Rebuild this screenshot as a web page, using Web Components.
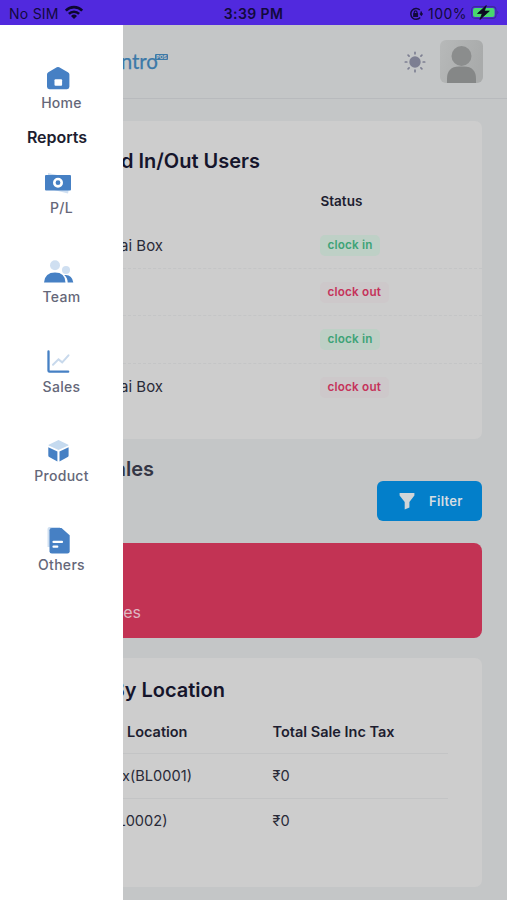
<!DOCTYPE html>
<html lang="en">
<head>
<meta charset="utf-8">
<title>Dashboard</title>
<style>
html,body{margin:0;height:100%;overflow:hidden}
body{font-family:Inter,"Liberation Sans",sans-serif;background:#c4c6c7;color:#15152b}
</style>
</head>
<body>
<pos-app></pos-app>
<script>
const define = (name, css, html) => customElements.define(name, class extends HTMLElement {
  constructor() {
    super();
    const root = this.attachShadow({ mode: "open" });
    const t = document.createElement("template");
    t.innerHTML = `<style>*{box-sizing:border-box}svg{display:block;flex:none}${css}</style>${html}`;
    root.append(t.content.cloneNode(true));
  }
});

define("status-bar", `
:host{display:grid;grid-template-columns:1fr auto 1fr;align-items:center;height:25px;flex:none;background:#5129de;color:#120a3c;padding:2px 8px 0 9px;font-size:14px;line-height:22px}
.l,.r{display:flex;align-items:center}.r{justify-content:flex-end}
.t{font-weight:600;letter-spacing:.4px;margin-right:1px}
`, `
<div class="l"><span style="letter-spacing:.25px">No SIM</span>
<svg width="20" height="15" viewBox="0 0 20 15" style="margin-left:5px;margin-top:-2px" fill="none" stroke="#0d0730" stroke-width="2.6"><path d="M1.8 5.6a11.5 11.5 0 0 1 16.4 0M4.9 8.9a7.2 7.2 0 0 1 10.2 0"/><path d="M10 14l-3-3a4.3 4.3 0 0 1 6 0z" fill="#0d0730" stroke="none"/></svg></div>
<div class="t">3:39 PM</div>
<div class="r">
<svg width="14" height="14" viewBox="0 0 14 14" fill="none" stroke="#120a3c" stroke-width="1.5"><path d="M10.8 2.9A5.4 5.4 0 1 0 11.2 10.6"/><path d="M12.2 4.4v3.1M11 6.4l1.3 1.6 1.3-1.6"/><rect x="4.1" y="6.1" width="5" height="3.9" rx=".6" fill="#120a3c" stroke="none"/><path d="M5.2 6.5V5.2a1.4 1.4 0 0 1 2.8 0v1.3" stroke-width="1.2"/></svg>
<span style="margin:0 4px 0 5px;letter-spacing:.45px">100%</span>
<svg width="28" height="15" viewBox="0 0 28 15" style="margin-top:-2px"><rect x=".6" y="1.6" width="24.4" height="11.8" rx="3.4" fill="none" stroke="#3d2a9c" stroke-width="1.1"/><rect x="2" y="3" width="21.6" height="9" rx="2" fill="#48d86e"/><path d="M26.3 5.5q2.2 2 0 4z" fill="#3d2a9c"/><path d="M15.3.5L6.5 8.5h4.8L8.9 14.5l9.4-8.4h-5z" fill="#0c0a20" stroke="#0c0a20" stroke-width=".8"/></svg>
</div>`);

define("nav-item", `
:host{display:flex;flex-direction:column;align-items:center;height:89.4px;color:#656779;font-size:14px;font-weight:500;line-height:20px;letter-spacing:.3px}
.i{width:28px;height:28px;margin-right:7px}
.t{margin-top:1px}
`, `<div class="i"><slot name="icon"></slot></div><div class="t"><slot></slot></div>`);

define("side-drawer", `
:host{display:flex;flex-direction:column;width:123px;flex:none;background:#fff;padding-top:38.8px}
h2{margin:0;font-size:16px;font-weight:600;line-height:24px;text-align:center;padding-right:9px;color:#1d1d30;letter-spacing:-.02px;margin-bottom:20px}
nav-item.home{height:61px}
`, `
<nav-item class="home"><svg slot="icon" width="28" height="28" viewBox="0 0 28 28"><path d="M3 10.5Q3 9 4.3 8.3L12.8 3.3Q14 2.6 15.2 3.3L23.9 8.3Q25.4 9 25.4 10.5V22.8Q25.4 25.2 23 25.2H5.4Q3 25.2 3 22.8Z" fill="#4680c4"/><rect x="10.5" y="15.2" width="7.6" height="6.6" rx="1" fill="#fff"/></svg>Home</nav-item>
<h2>Reports</h2>
<nav-item><svg slot="icon" width="28" height="28" viewBox="0 0 28 28"><path d="M4 4l23 5-3 15.5-20-5z" fill="#cfdff1"/><rect x="1" y="6" width="26" height="15.4" rx="1" fill="#4680c4"/><circle cx="14" cy="13.7" r="3.7" fill="none" stroke="#fff" stroke-width="2.6"/></svg>P/L</nav-item>
<nav-item><svg slot="icon" width="30" height="28" viewBox="0 0 30 28"><circle cx="11" cy="7.2" r="5" fill="#cfdff1"/><circle cx="22" cy="12" r="4" fill="#cfdff1"/><path d="M0 24.4Q1 14.6 11 14.6T21.5 24.4Z" fill="#4680c4"/><path d="M20.2 17Q28 16 29.3 24.4H23.7Q23.6 20 20.2 17Z" fill="#4680c4"/></svg>Team</nav-item>
<nav-item><svg slot="icon" width="28" height="28" viewBox="0 0 28 28" fill="none" stroke-linecap="round"><path d="M4.5 3.5V22.8Q4.5 23.7 5.5 23.7H24.2" stroke="#4680c4" stroke-width="2.3"/><path d="M9 16.8l5.5-5.4 3.7 3L24.5 7.3" stroke="#c8d9ec" stroke-width="2"/></svg>Sales</nav-item>
<nav-item><svg slot="icon" width="28" height="28" viewBox="0 0 28 28"><path d="M14.5 2.9L24.3 7.7Q25 8.2 24.3 8.6L14.5 13 4.7 8.6Q4 8.2 4.7 7.7Z" fill="#c5daef"/><path d="M4.3 10.3L13.4 14.5V24.4L5.2 20Q4.3 19.5 4.3 18.5ZM24.6 10.3L15.5 14.5V24.4L23.7 20Q24.6 19.5 24.6 18.5Z" fill="#4680c4"/></svg>Product</nav-item>
<nav-item><svg slot="icon" width="28" height="28" viewBox="0 0 28 28"><path d="M3.5 3Q3.5 1 5.5 1H16V21H3.5Z" fill="#cfdff1"/><path d="M5.5 4.3Q5.5 2 7.8 2H17.5L25.7 9.3V25.2Q25.7 27.5 23.4 27.5H7.8Q5.5 27.5 5.5 25.2Z" fill="#4680c4"/><path d="M9.5 15.9H18M9.5 20.7H13.3" stroke="#fff" stroke-width="2.2" stroke-linecap="round"/></svg>Others</nav-item>`);

/* Label cut off at its left side by the drawer's edge */
define("cut-text", `
:host{display:flex;justify-content:flex-end;overflow:hidden;white-space:pre;flex:none}
span{flex:none}`, `<span><slot></slot></span>`);

define("top-bar", `
:host{display:flex;align-items:center;height:73.6px;flex:none;border-bottom:1.5px solid #b8babd;padding:1px 25px 0 0;margin-right:-1px}
.logo{width:35px;margin-top:-2px;font-family:Lato,sans-serif;font-size:20.5px;line-height:24px;color:#3c79a8;-webkit-text-stroke:.25px #3c79a8}
.pos{align-self:flex-start;margin:28px 0 0 -3px;background:#3c79a8;color:#c4c6c7;font-size:5px;font-weight:700;line-height:6px;height:6px;border-radius:1px;width:13px;text-align:center}
.sun{margin-left:auto}.av{margin:0 0 0 14px}
`, `
<cut-text class="logo">ntro</cut-text><div class="pos">POS</div>
<svg class="sun" width="22" height="22" viewBox="0 0 22 22" stroke="#7d7f92" stroke-width="1.7" stroke-linecap="round"><circle cx="11" cy="11" r="5.7" fill="#7d7f92" stroke="none"/><path d="M11 1.3v1.5M11 19.2v1.5M1.3 11h1.5M19.2 11h1.5M4.1 4.1l1 1M16.9 16.9l1 1M4.1 17.9l1-1M16.9 5.1l1-1"/></svg>
<svg class="av" width="43" height="43" viewBox="0 0 43 43"><defs><linearGradient id="g" x2="1" y2=".3"><stop stop-color="#b7b9b9"/><stop offset="1" stop-color="#a9abab"/></linearGradient><clipPath id="c"><rect width="43" height="43" rx="6"/></clipPath></defs><g clip-path="url(#c)"><rect width="43" height="43" fill="url(#g)"/><circle cx="21.5" cy="16" r="10" fill="#8b8d8d"/><path d="M7 43V39Q7 26.5 19 26.5H24Q36 26.5 36 39V43Z" fill="#858787"/></g></svg>`);

define("clock-badge", `
:host{display:inline-block;border-radius:5px;padding:0 7.5px;line-height:21px;height:21px;font-size:11.7px;font-weight:600;letter-spacing:.2px;background:#bed0c6;color:#3da377}
:host([out]){background:#cdc8ca;color:#c5335b}
`, `<slot></slot>`);

define("user-row", `
:host{display:flex;align-items:center;height:47.2px;border-bottom:1px dashed #c4c5c6;font-size:15px;color:#292a38}
:host([last]){border-color:transparent}
cut-text{width:40px}.s{margin-left:157px}
`, `<cut-text><slot></slot></cut-text><div class="s"><slot name="status"></slot></div>`);

define("panel-card", `
:host{display:block;background:#cdcdcd;border-radius:0 7px 7px 0;flex:none}
`, `<slot name="title"></slot><slot></slot>`);

define("filter-button", `
:host{display:flex;align-items:center;width:105px;height:40px;border-radius:6px;background:#037fca;color:#d5dde2;font-size:13px;font-weight:600;letter-spacing:.3px;padding-left:22px;gap:14px}
`, `<svg width="16" height="18" viewBox="0 0 16 18"><path d="M.6 1H15.4V3.4L10.4 10V15.5L5.7 17.5V10L.6 3.4Z" fill="#d0d5d8"/></svg><slot></slot>`);

define("sales-row", `
:host{display:flex;align-items:center;height:44.7px;width:325px;font-size:14.6px;color:#292a38;border-top:1px solid #c3c4c5}
:host([head]){border:0;font-weight:600;font-size:14.5px;color:#1d1d30}
.c{width:149.5px}
`, `<div class="c"><slot></slot></div><slot name="total"></slot>`);

define("dash-main", `
:host{display:flex;flex-direction:column;flex:1;min-width:0;overflow:hidden}
main{padding:22.4px 25px 0 0;display:flex;flex-direction:column}
.users{height:318px;padding-top:26.5px}
.h{font-size:20px;font-weight:600;line-height:28px;color:#15152b}
.th{font-size:13.5px;font-weight:600;line-height:20px;padding:16px 0 0 197.5px;margin-bottom:10.5px;color:#1d1d30}
.bar{display:flex;justify-content:space-between;align-items:flex-end;height:82px;flex:none}
.bar .h{align-self:flex-start;margin-top:16px;width:31px;color:#343645}
.pink{height:95px;margin-top:22.5px;border-radius:0 8px 8px 0;background:#c23354;color:#dfb8c2;font-size:16px;line-height:24px;padding-top:57px;flex:none}
.loc{height:229px;margin-top:19.5px;padding-top:18px}
`, `
<top-bar></top-bar>
<main>
<panel-card class="users">
<cut-text slot="title" class="h" style="width:137px">d In/Out Users</cut-text>
<div class="th">Status</div>
<user-row>ai Box<clock-badge slot="status">clock in</clock-badge></user-row>
<user-row><clock-badge slot="status" out>clock out</clock-badge></user-row>
<user-row><clock-badge slot="status">clock in</clock-badge></user-row>
<user-row last>ai Box<clock-badge slot="status" out>clock out</clock-badge></user-row>
</panel-card>
<div class="bar"><cut-text class="h">ales</cut-text><filter-button>Filter</filter-button></div>
<div class="pink"><cut-text style="width:18px">es</cut-text></div>
<panel-card class="loc">
<cut-text slot="title" class="h" style="width:102px">By Location</cut-text>
<sales-row head style="height:43px;margin-top:6px"><cut-text style="width:64.5px">Location</cut-text><span slot="total">Total Sale Inc Tax</span></sales-row>
<sales-row><cut-text style="width:69px">x(BL0001)</cut-text><span slot="total">₹0</span></sales-row>
<sales-row><cut-text style="width:44.5px">L0002)</cut-text><span slot="total">₹0</span></sales-row>
</panel-card>
</main>`);

define("pos-app", `
:host{display:flex;flex-direction:column;width:507px;height:900px;overflow:hidden}
.b{display:flex;flex:1;min-height:0}
`, `<status-bar></status-bar><div class="b"><side-drawer></side-drawer><dash-main></dash-main></div>`);
</script>
</body>
</html>
